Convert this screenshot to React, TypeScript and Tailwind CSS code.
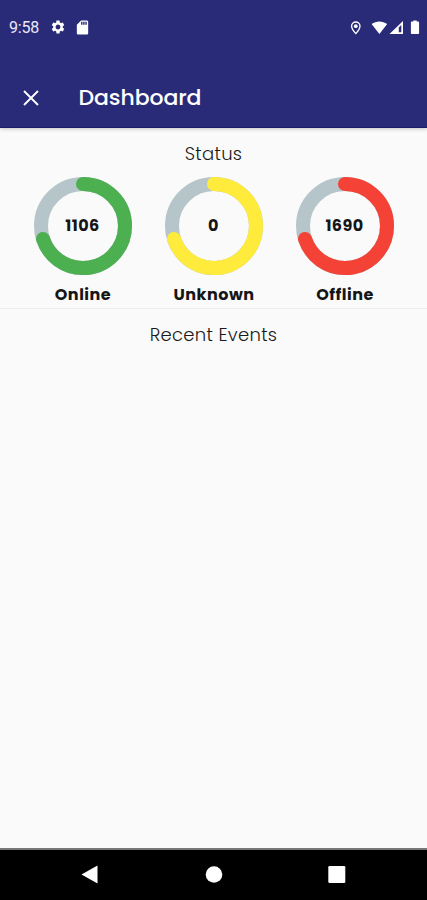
import React from "react";
import { MdSettings, MdSdCard } from "react-icons/md";

type StatusGaugeProps = {
  value: number;
  label: string;
  color: string;
};

function StatusGauge({ value, label, color }: StatusGaugeProps) {
  return (
    <div className="flex w-[131px] flex-col items-center">
      <div className="grid h-[98px] w-[98px] place-items-center">
        <svg viewBox="0 0 98 98" className="col-start-1 row-start-1 h-[98px] w-[98px]" fill="none">
          <circle cx="49" cy="49" r="42" stroke="#b5c5ca" strokeWidth="14" />
          <circle
            cx="49"
            cy="49"
            r="42"
            stroke={color}
            strokeWidth="14"
            strokeLinecap="round"
            pathLength="100"
            strokeDasharray="70 100"
            transform="rotate(-90 49 49)"
          />
        </svg>
        <span className="col-start-1 row-start-1 text-[16px] leading-5 font-bold tracking-[0.4px] text-[#151515]">{value}</span>
      </div>
      <span className="mt-[10px] pl-[1px] text-[16px] leading-5 font-bold tracking-[0.5px] text-[#151515] [font-feature-settings:'liga'_1]">{label}</span>
    </div>
  );
}

function StatusBar() {
  return (
    <div className="flex h-14 items-center pr-[7px] pl-[9px] text-white">
      <span className="w-[41px] font-[Roboto,sans-serif] text-[16px] leading-5 tracking-[-0.2px] text-[#e9e9fa]">9:58</span>
      <MdSettings className="h-4 w-4 -translate-y-px" />
      <MdSdCard className="ml-[8px] h-[17px] w-[17px] -translate-y-px" />
      <svg viewBox="0 0 72 16" className="ml-auto h-4 w-[72px]" fill="none">
        <path d="M7.800 13.600C5 10.400 3.600 8.600 3.600 6.200a4.200 4.200 0 0 1 8.400 0c0 2.400-1.400 4.200-4.200 7.400Z" stroke="white" strokeWidth="1.3" />
        <circle cx="7.800" cy="6.200" r="1.900" fill="white" />
        <path d="M23.600 4C28.200 0.600 34.600 0.600 39.200 4L31.400 14Z" fill="white" />
        <path d="M55 1V14H41.500Z" fill="white" />
        <path d="M50.800 7.500L53.300 5V12.200H50.800Z" fill="#292b78" />
        <path d="M63.700 1.600H65.300V0.400H68.700V1.600H70.300Q71.100 1.600 71.100 2.400V13.200Q71.100 14 70.300 14H63.700Q62.900 14 62.900 13.200V2.400Q62.900 1.600 63.700 1.600Z" fill="white" />
      </svg>
    </div>
  );
}

export default function App() {
  return (
    <div className="flex h-[900px] w-[427px] flex-col overflow-hidden bg-[#fafafa] font-[Poppins,Inter,sans-serif]">
      <header className="z-10 h-[128px] border-b border-[#1c1c66] bg-[#292b78] shadow-[0_1px_4px_rgba(0,0,0,0.22)]">
        <StatusBar />
        <div className="flex h-[82px] items-center pl-[23px]">
          <svg viewBox="0 0 16 16" className="mt-[2px] h-4 w-4" stroke="white" strokeWidth="1.9">
            <path d="M1 1L15 15M15 1L1 15" />
          </svg>
          <h1 className="ml-[39.5px] pt-[1px] text-[22px] leading-7 font-medium tracking-[-0.1px] text-white">Dashboard</h1>
        </div>
      </header>
      <main className="flex flex-1 flex-col">
        <section className="flex h-[181px] flex-col items-center border-b border-[#eeeeee] pt-[14px]">
          <h2 className="text-[18px] leading-6 font-light tracking-[0.3px] text-[#1a1a1a]">Status</h2>
          <div className="mt-[11px] flex">
            <StatusGauge value={1106} label="Online" color="#4caf50" />
            <StatusGauge value={0} label="Unknown" color="#ffeb3b" />
            <StatusGauge value={1690} label="Offline" color="#f44336" />
          </div>
        </section>
        <section className="flex justify-center pt-[14px]">
          <h2 className="text-[18px] leading-6 font-light tracking-[0.3px] text-[#1a1a1a]">Recent Events</h2>
        </section>
      </main>
      <nav className="h-[52px] border-t-2 border-[#777777] bg-black">
        <svg viewBox="0 0 427 50" className="h-[50px] w-[427px]" fill="white">
          <path d="M81.500 24.500L97.500 15.500V33.500Z" />
          <circle cx="214" cy="24.500" r="8.300" />
          <rect x="328.300" y="16" width="17" height="17" rx="1.200" />
        </svg>
      </nav>
    </div>
  );
}
